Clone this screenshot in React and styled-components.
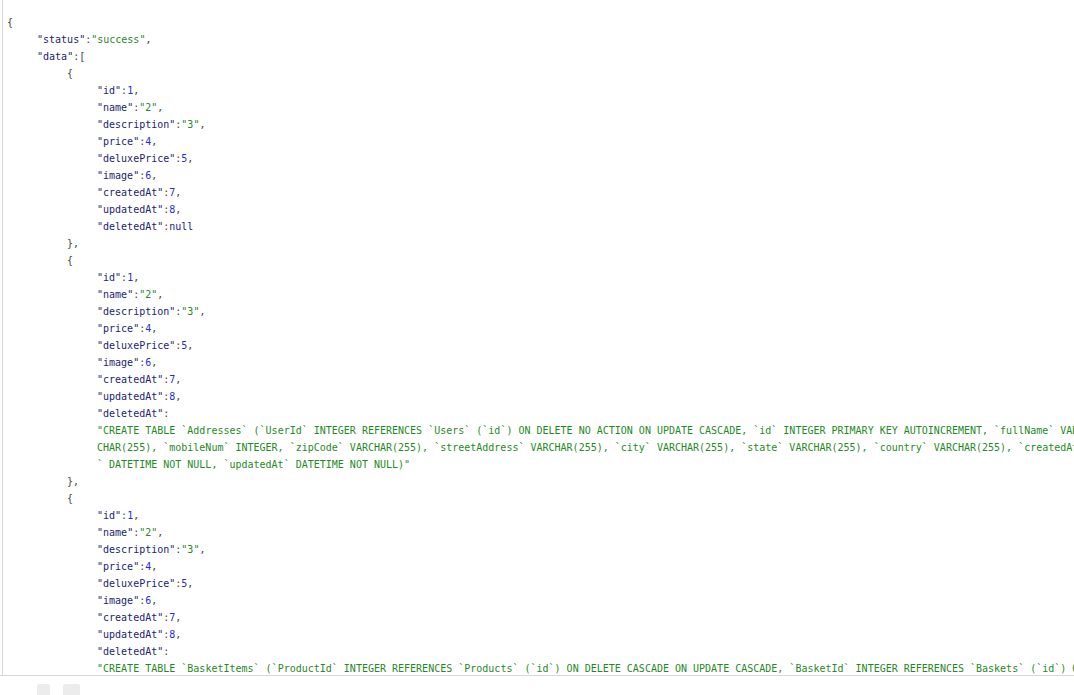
import React from "react";
import styled, { createGlobalStyle } from "styled-components";

const GlobalStyle = createGlobalStyle`
  html, body {
    margin: 0;
    padding: 0;
    background: #fff;
    overflow: hidden;
  }
`;

const Page = styled.div`
  display: flex;
  flex-direction: column;
  width: 100vw;
  height: 100vh;
  overflow: hidden;
`;

const Frame = styled.div`
  flex: 1;
  min-height: 0;
  display: flex;
  border-bottom: 1px solid #d8d8d8;
  overflow: hidden;
`;

const Viewer = styled.div`
  flex: 1;
  margin-left: 2px;
  border-left: 1px solid #d8d8d8;
  padding: 14px 0 0 4px;
  overflow: hidden;
  font-family: "DejaVu Sans Mono", monospace;
  font-size: 10px;
  line-height: 17px;
  color: #444;
  white-space: pre;
`;

const Footer = styled.div`
  height: 11px;
  display: flex;
  gap: 13px;
  padding: 8px 0 0 37px;
  overflow: hidden;
`;

const FooterBtn = styled.div`
  width: ${(p) => p.w}px;
  height: 20px;
  background: #ececec;
  border-radius: 2px;
`;

const Line = styled.div`
  padding-left: ${(p) => p.depth * 30}px;
`;

const Key = styled.span`
  color: #1c1c74;
`;

const Str = styled.span`
  color: #1f8a1f;
`;

const Num = styled.span`
  color: #2a2ad4;
`;

const Null = styled.span`
  color: #1c1c74;
`;

const LongStr = styled.div`
  box-sizing: content-box;
  padding-left: ${(p) => p.depth * 30}px;
  width: calc(163ch + 3px);
  white-space: normal;
  word-break: break-all;
  color: #1f8a1f;
`;

const addresses =
  "CREATE TABLE `Addresses` (`UserId` INTEGER REFERENCES `Users` (`id`) ON DELETE NO ACTION ON UPDATE CASCADE, `id` INTEGER PRIMARY KEY AUTOINCREMENT, `fullName` VARCHAR(255), `mobileNum` INTEGER, `zipCode` VARCHAR(255), `streetAddress` VARCHAR(255), `city` VARCHAR(255), `state` VARCHAR(255), `country` VARCHAR(255), `createdAt` DATETIME NOT NULL, `updatedAt` DATETIME NOT NULL)";

const basketItems =
  "CREATE TABLE `BasketItems` (`ProductId` INTEGER REFERENCES `Products` (`id`) ON DELETE CASCADE ON UPDATE CASCADE, `BasketId` INTEGER REFERENCES `Baskets` (`id`) ON DELETE CASCADE ON UPDATE CASCADE, `id` INTEGER PRIMARY KEY AUTOINCREMENT, `quantity` INTEGER, `createdAt` DATETIME NOT NULL, `updatedAt` DATETIME NOT NULL, UNIQUE (`ProductId`, `BasketId`))";

const product = (deletedAt) => ({
  id: 1,
  name: "2",
  description: "3",
  price: 4,
  deluxePrice: 5,
  image: 6,
  createdAt: 7,
  updatedAt: 8,
  deletedAt,
});

const payload = {
  status: "success",
  data: [product(null), product(addresses), product(basketItems)],
};

function Value({ v }) {
  if (v === null) return <Null>null</Null>;
  if (typeof v === "number") return <Num>{v}</Num>;
  return <Str>"{v}"</Str>;
}

function renderNode(value, depth, keyName, last, out) {
  const comma = last ? "" : ",";
  const label = keyName != null ? <Key>"{keyName}"</Key> : null;

  if (Array.isArray(value) || (value && typeof value === "object")) {
    const isArr = Array.isArray(value);
    out.push(
      <Line depth={depth} key={out.length}>
        {label}
        {label ? ":" : ""}
        {isArr ? "[" : "{"}
      </Line>
    );
    const entries = isArr ? value.map((v) => [null, v]) : Object.entries(value);
    entries.forEach(([k, v], i) => renderNode(v, depth + 1, k, i === entries.length - 1, out));
    out.push(
      <Line depth={depth} key={out.length}>
        {isArr ? "]" : "}"}
        {comma}
      </Line>
    );
    return;
  }

  // long strings drop onto their own wrapped block under the key
  if (typeof value === "string" && value.length > 60) {
    out.push(
      <Line depth={depth} key={out.length}>
        {label}:
      </Line>
    );
    out.push(
      <LongStr depth={depth} key={out.length}>
        "{value}"{comma}
      </LongStr>
    );
    return;
  }

  out.push(
    <Line depth={depth} key={out.length}>
      {label}
      {label ? ":" : ""}
      <Value v={value} />
      {comma}
    </Line>
  );
}

export default function App() {
  const lines = [];
  renderNode(payload, 0, null, true, lines);
  return (
    <Page>
      <GlobalStyle />
      <Frame>
        <Viewer>{lines}</Viewer>
      </Frame>
      <Footer>
        <FooterBtn w={13} />
        <FooterBtn w={17} />
      </Footer>
    </Page>
  );
}
